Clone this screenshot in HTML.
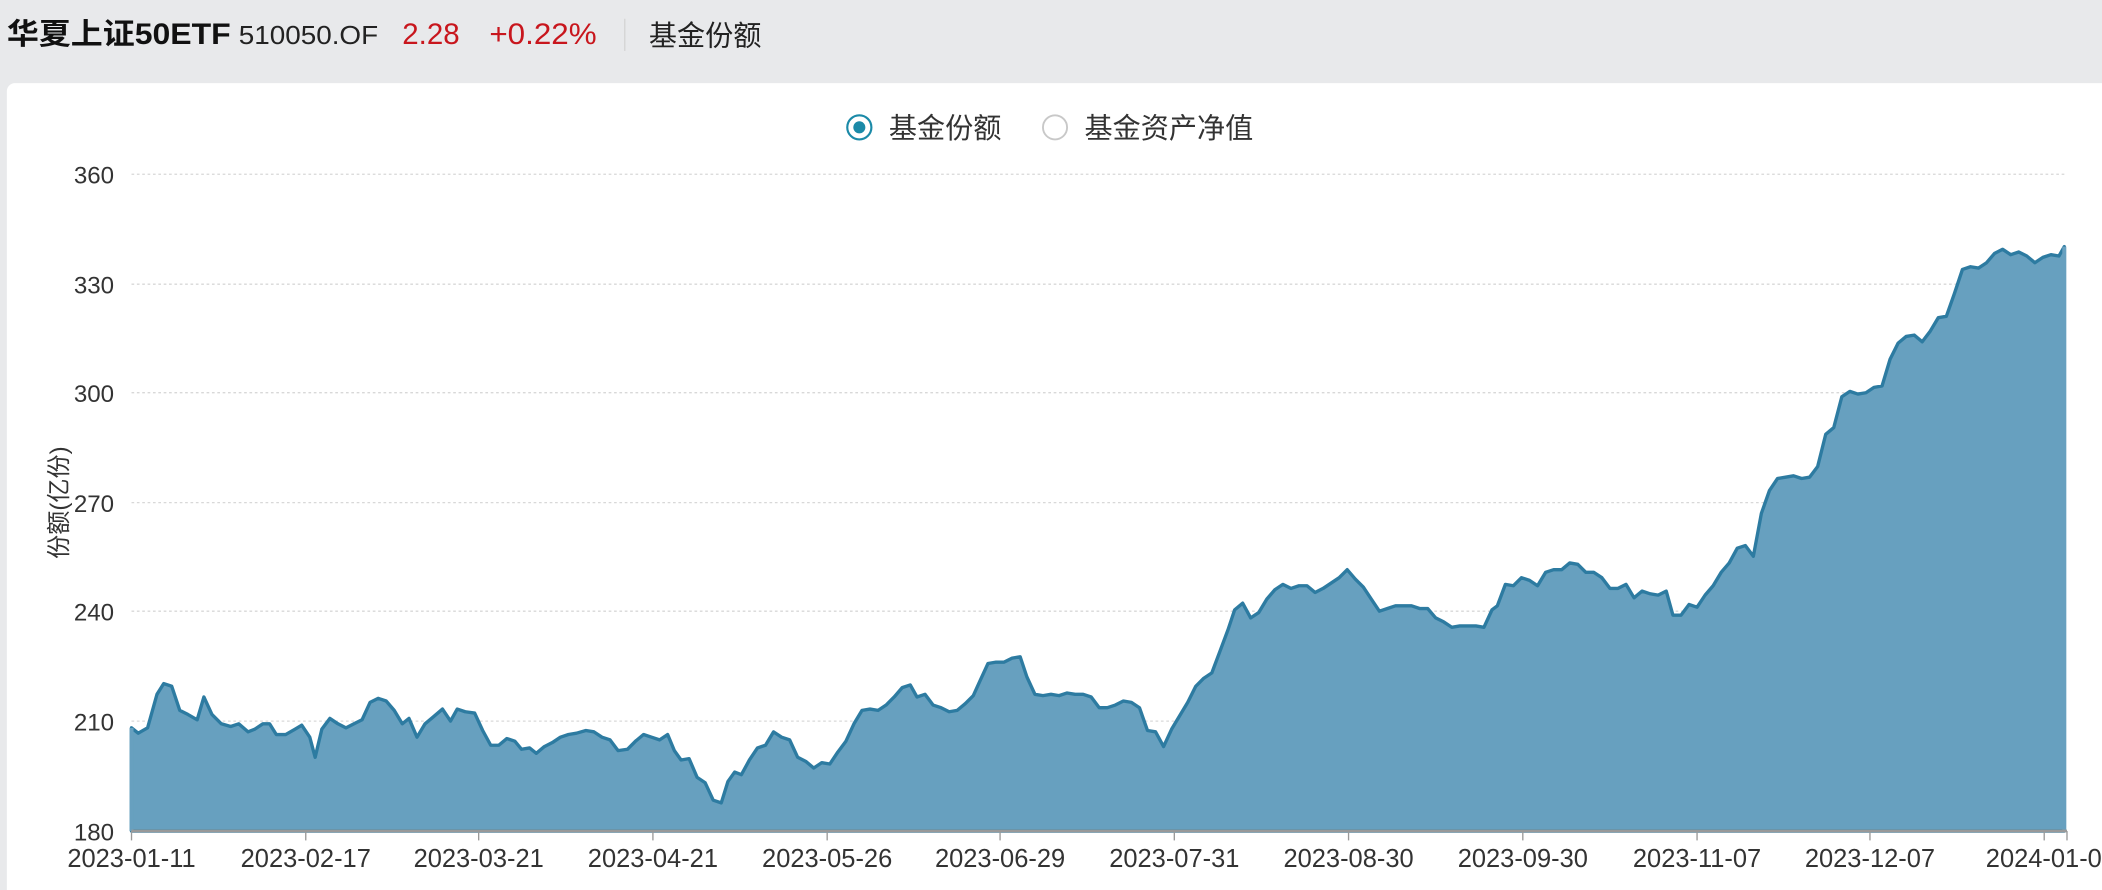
<!DOCTYPE html>
<html><head><meta charset="utf-8"><style>
html,body{margin:0;padding:0;width:2102px;height:890px;overflow:hidden;background:#e8e9eb}
svg{display:block}
text{font-family:"Liberation Sans","Noto Sans CJK SC",sans-serif}
</style></head><body>
<svg width="2102" height="890" viewBox="0 0 1568 664" xmlns="http://www.w3.org/2000/svg">
<rect x="0" y="0" width="1568" height="664" fill="#e8e9eb"/>
<text x="5" y="33" font-size="22" font-weight="bold" fill="#111" textLength="167" lengthAdjust="spacingAndGlyphs">华夏上证50ETF</text>
<text x="178" y="33" font-size="19" fill="#222" textLength="104" lengthAdjust="spacingAndGlyphs">510050.OF</text>
<text x="300" y="33" font-size="22" fill="#c8161d">2.28</text>
<text x="365" y="33" font-size="22" fill="#c8161d" textLength="80" lengthAdjust="spacingAndGlyphs">+0.22%</text>
<line x1="466" y1="14" x2="466" y2="38" stroke="#d4d4d4" stroke-width="1"/>
<text x="484" y="34" font-size="21" fill="#222">基金份额</text>
<rect x="5" y="62" width="1580" height="620" rx="6" fill="#fff"/>
<circle cx="641" cy="95" r="9" fill="#fff" stroke="#1b8aa8" stroke-width="1.6"/>
<circle cx="641" cy="95" r="4.5" fill="#1b8aa8"/>
<text x="663" y="103" font-size="21" fill="#333">基金份额</text>
<circle cx="787" cy="95" r="9" fill="#fff" stroke="#c8c8c8" stroke-width="1.4"/>
<text x="809" y="103" font-size="21" fill="#333">基金资产净值</text>
<g stroke="#d8d8d8" stroke-width="1" stroke-dasharray="2,2">
<line x1="98" y1="130" x2="1542" y2="130"/><line x1="98" y1="212" x2="1542" y2="212"/>
<line x1="98" y1="293" x2="1542" y2="293"/><line x1="98" y1="375" x2="1542" y2="375"/>
<line x1="98" y1="456" x2="1542" y2="456"/><line x1="98" y1="538" x2="1542" y2="538"/>
</g>
<g font-size="18" fill="#333" text-anchor="end">
<text x="85" y="137">360</text><text x="85" y="219">330</text><text x="85" y="300">300</text>
<text x="85" y="382">270</text><text x="85" y="463">240</text><text x="85" y="545">210</text><text x="85" y="627">180</text>
</g>
<text transform="translate(50,375) rotate(-90)" font-size="18" fill="#333" text-anchor="middle">份额(亿份)</text>
<path fill="#67a0bf" stroke="#2d7ba1" stroke-width="2.5" stroke-linejoin="round" d="M98,620 L98,543 L103,547 L110,543 L117,518 L122,510 L128,512 L134,530 L140,533 L147,537 L152,520 L158,533 L165,540 L172,542 L178,540 L185,546 L190,544 L196,540 L201,540 L206,548 L213,548 L220,544 L225,541 L231,550 L235,565 L240,544 L246,536 L252,540 L258,543 L264,540 L270,537 L276,524 L282,521 L288,523 L294,530 L300,540 L305,536 L311,550 L317,540 L323,535 L330,529 L336,538 L341,529 L347,531 L354,532 L360,545 L366,556 L372,556 L378,551 L384,553 L389,559 L395,558 L400,562 L406,557 L412,554 L418,550 L424,548 L430,547 L437,545 L443,546 L449,550 L455,552 L461,560 L468,559 L474,553 L480,548 L486,550 L492,552 L498,548 L503,560 L508,567 L514,566 L520,580 L526,584 L532,597 L538,599 L543,583 L548,576 L553,578 L559,567 L565,558 L571,556 L577,546 L583,550 L589,552 L595,565 L601,568 L607,573 L613,569 L619,570 L625,561 L631,553 L637,540 L643,530 L649,529 L655,530 L661,526 L667,520 L673,513 L679,511 L684,520 L690,518 L696,526 L702,528 L708,531 L714,530 L720,525 L726,519 L731,508 L737,495 L743,494 L749,494 L755,491 L761,490 L766,505 L772,518 L778,519 L784,518 L790,519 L796,517 L802,518 L808,518 L814,520 L820,528 L826,528 L832,526 L838,523 L844,524 L850,528 L856,545 L862,546 L868,557 L874,544 L880,534 L886,524 L892,512 L898,506 L904,502 L910,486 L916,470 L921,455 L927,450 L933,461 L939,457 L945,447 L951,440 L957,436 L963,439 L969,437 L975,437 L981,442 L987,439 L993,435 L999,431 L1005,425 L1011,432 L1017,438 L1023,447 L1029,456 L1035,454 L1041,452 L1047,452 L1053,452 L1059,454 L1065,454 L1071,461 L1077,464 L1083,468 L1089,467 L1095,467 L1101,467 L1107,468 L1113,455 L1117,452 L1123,436 L1129,437 L1135,431 L1141,433 L1147,437 L1153,427 L1159,425 L1165,425 L1171,420 L1177,421 L1183,427 L1189,427 L1195,431 L1201,439 L1207,439 L1213,436 L1219,446 L1225,441 L1231,443 L1237,444 L1243,441 L1248,459 L1254,459 L1260,451 L1266,453 L1272,444 L1278,437 L1284,427 L1290,420 L1296,409 L1302,407 L1308,415 L1314,383 L1320,366 L1326,357 L1332,356 L1338,355 L1344,357 L1350,356 L1356,348 L1362,324 L1368,319 L1374,296 L1380,292 L1386,294 L1392,293 L1398,289 L1404,288 L1410,268 L1416,256 L1422,251 L1428,250 L1434,255 L1440,247 L1446,237 L1452,236 L1458,219 L1464,201 L1470,199 L1476,200 L1482,196 L1488,189 L1494,186 L1500,190 L1506,188 L1512,191 L1518,196 L1524,192 L1530,190 L1536,191 L1540,184 L1540,620 Z"/>
<path fill="none" stroke="#67a0bf" stroke-width="3" d="M98,620 L98,543 M1540,184 L1540,620"/>
<line x1="98" y1="620" x2="1542" y2="620" stroke="#999" stroke-width="2"/>
<g stroke="#999" stroke-width="1">
<line x1="98" y1="620" x2="98" y2="627"/><line x1="228" y1="620" x2="228" y2="627"/><line x1="357" y1="620" x2="357" y2="627"/><line x1="487" y1="620" x2="487" y2="627"/><line x1="617" y1="620" x2="617" y2="627"/><line x1="746" y1="620" x2="746" y2="627"/><line x1="876" y1="620" x2="876" y2="627"/><line x1="1006" y1="620" x2="1006" y2="627"/><line x1="1136" y1="620" x2="1136" y2="627"/><line x1="1266" y1="620" x2="1266" y2="627"/><line x1="1395" y1="620" x2="1395" y2="627"/><line x1="1525" y1="620" x2="1525" y2="627"/><line x1="1542" y1="620" x2="1542" y2="627"/>
</g>
<g font-size="19" fill="#333" text-anchor="middle">
<text x="98" y="647">2023-01-11</text><text x="228" y="647">2023-02-17</text><text x="357" y="647">2023-03-21</text><text x="487" y="647">2023-04-21</text><text x="617" y="647">2023-05-26</text><text x="746" y="647">2023-06-29</text><text x="876" y="647">2023-07-31</text><text x="1006" y="647">2023-08-30</text><text x="1136" y="647">2023-09-30</text><text x="1266" y="647">2023-11-07</text><text x="1395" y="647">2023-12-07</text><text x="1530" y="647">2024-01-05</text>
</g>
</svg>
</body></html>
